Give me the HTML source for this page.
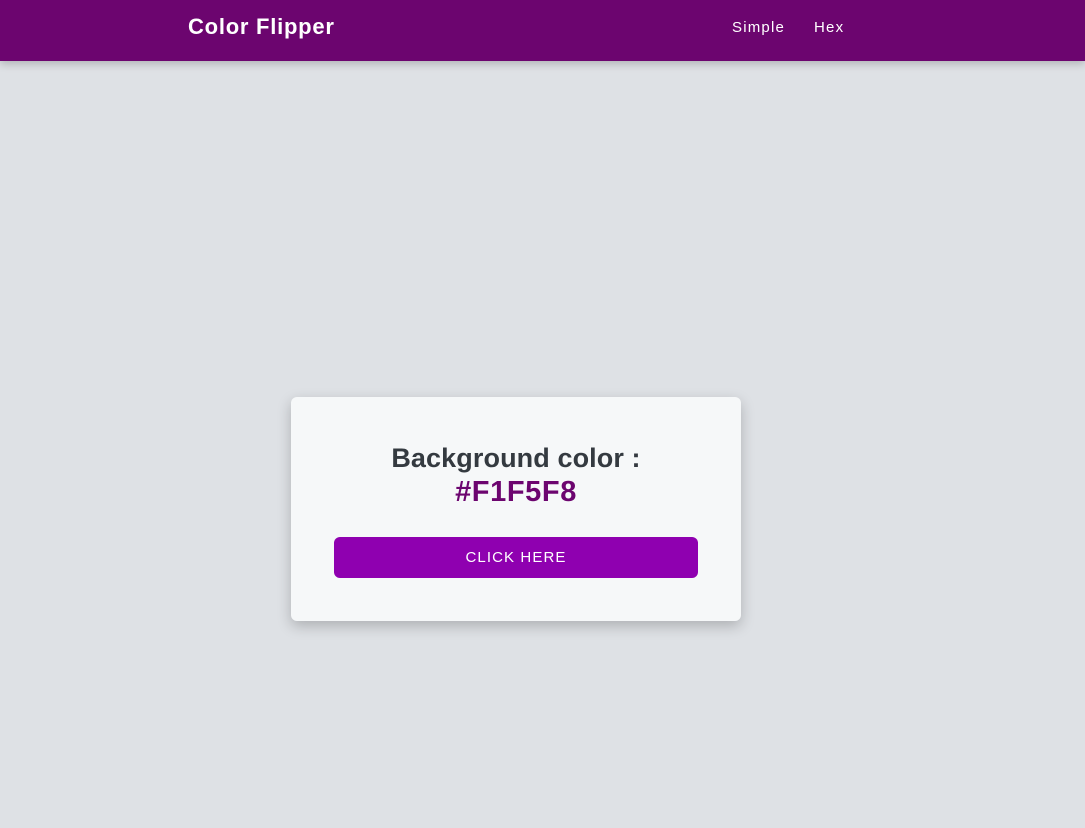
<!DOCTYPE html>
<html><head><style>
html,body{margin:0;padding:0;width:1085px;height:828px;background:#dee1e5;font-family:"Liberation Sans",sans-serif;overflow:hidden}
nav{position:absolute;left:0;top:0;width:1085px;height:61px;background:#6c056f;box-shadow:0 3px 8px rgba(0,0,0,.2)}
.logo{position:absolute;left:188px;top:14px;color:#fff;font-weight:bold;font-size:22px;letter-spacing:.75px}
.l{position:absolute;top:19px;color:#fff;font-size:15px;letter-spacing:1.2px}
.card{position:absolute;left:291px;top:397px;width:450px;height:224px;background:#f6f8f9;border-radius:6px;box-shadow:0 5px 14px rgba(0,0,0,.22)}
h2{margin:0;position:absolute;top:44px;width:100%;text-align:center;font-size:27px;color:#343a40;line-height:34px;font-weight:bold;letter-spacing:.1px}
h2 span{color:#6c056f;font-size:29px;letter-spacing:.6px}
.btn{position:absolute;left:43px;top:140px;width:364px;height:41px;background:#8f00b0;border-radius:6px;color:#fff;text-align:center;line-height:41px;font-size:15px;letter-spacing:1.1px}
</style></head><body>
<nav><div class="logo">Color Flipper</div><div class="l" style="left:732px">Simple</div><div class="l" style="left:814px">Hex</div></nav>
<div class="card"><h2>Background color :<br><span>#F1F5F8</span></h2><div class="btn">CLICK HERE</div></div>
</body></html>
